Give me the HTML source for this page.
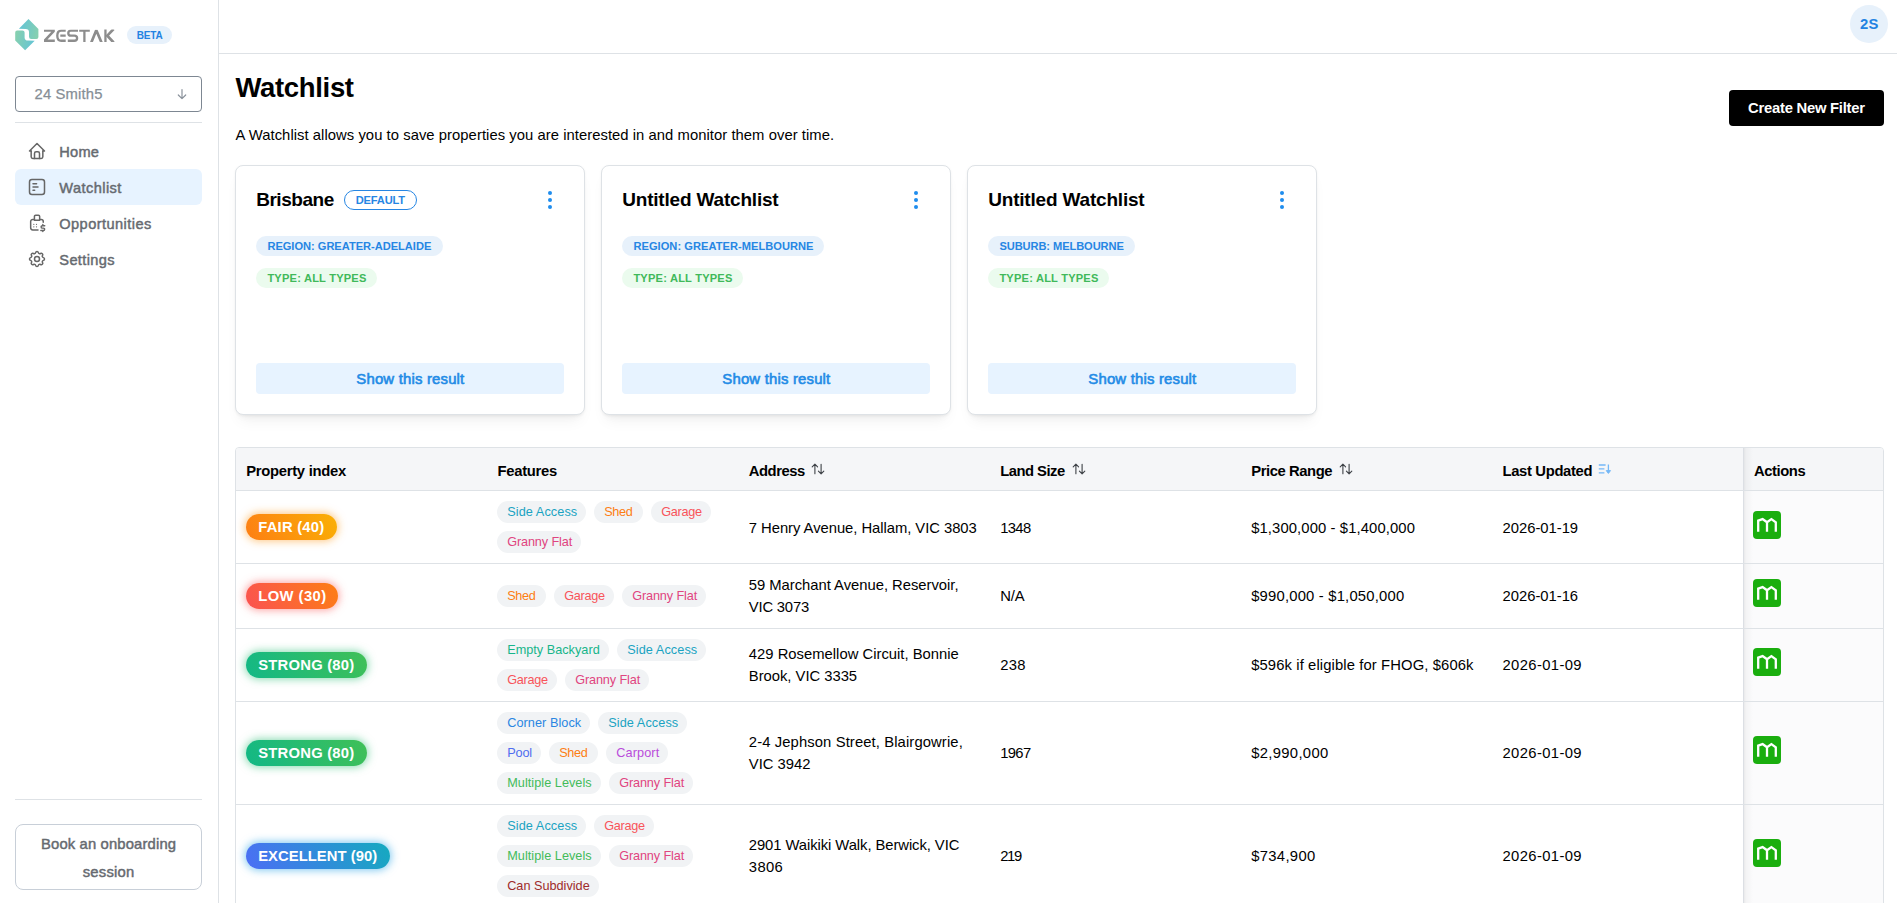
<!DOCTYPE html>
<html>
<head>
<meta charset="utf-8">
<title>Watchlist</title>
<style>
*{box-sizing:border-box;margin:0;padding:0}
html,body{width:1897px;height:903px;overflow:hidden;background:#fff;font-family:"Liberation Sans",sans-serif;color:#000}
div,svg{position:absolute}
.t{white-space:nowrap}
.hr{left:15px;width:187px;height:1px;background:#dee2e6}
.card{top:165px;width:350px;height:250px;border:1px solid #dee2e6;border-radius:8px;background:#fff;box-shadow:0 1px 3px rgba(0,0,0,.05),0 10px 15px -5px rgba(0,0,0,.06),0 7px 7px -5px rgba(0,0,0,.04)}
.dot{width:4px;height:4px;border-radius:2px;background:#1f8dee}
.tagb{height:20px;border-radius:10px;background:#e7f1fb}
.tagg{height:20px;border-radius:10px;background:#ebfbee}
.show{width:308px;height:31px;border-radius:4px;background:#e7f3ff}
.rowline{left:236px;width:1647px;height:1px;background:#dee2e6}
.chip{height:22px;border-radius:11px;background:#f1f3f5}
.pill{height:26px;border-radius:13px}
.m{left:1753px;width:28px;height:28px;border-radius:4px;background:#1aae0e}
</style>
</head>
<body>
<div id="root" style="left:0;top:0;width:1897px;height:903px;overflow:hidden">
<div style="left:218px;top:0;width:1px;height:903px;background:#dee2e6"></div>
<div style="left:219px;top:53px;width:1678px;height:1px;background:#dee2e6"></div>
<svg style="left:10px;top:15px" width="40" height="40" viewBox="0 0 40 40">
<defs>
<linearGradient id="lg1" x1="0" y1="0.35" x2="1" y2="0.65"><stop offset="0" stop-color="#63c4d6"/><stop offset="1" stop-color="#86d0b0"/></linearGradient>
<linearGradient id="lg2" x1="0" y1="0.4" x2="1" y2="1"><stop offset="0" stop-color="#86d0b0"/><stop offset="1" stop-color="#63c4d6"/></linearGradient>
</defs>
<path id="lp" fill="url(#lg1)" d="M18.5 4.1 L28.4 13.9 V22 Q28.4 24 26.4 24 H21.2 Q19 24 19 21.8 V17 Q19 13.9 15.6 13.9 L8.9 13.7 Z"/>
<path fill="url(#lg1)" transform="rotate(180 16.8 19.7)" d="M18.5 4.1 L28.4 13.9 V22 Q28.4 24 26.4 24 H21.2 Q19 24 19 21.8 V17 Q19 13.9 15.6 13.9 L8.9 13.7 Z"/>
</svg>
<svg style="left:40px;top:20px" width="80" height="30" viewBox="0 0 80 30">
<defs><clipPath id="wc"><rect x="0" y="9.5" width="80" height="12.4"/></clipPath></defs>
<g fill="none" stroke="#8d8d8d" stroke-width="2.3" clip-path="url(#wc)">
<path stroke="none" fill="#8d8d8d" d="M4 9.5H14.8V11.8L7.5 19.6H14.8V21.9H4V19.6L11.3 11.8H4Z"/>
<path d="M25.7 10.65 H21.2 Q17.3 10.65 17.3 15.7 Q17.3 20.75 21.2 20.75 H25.7 M20.3 15.7 H25.7"/>
<path d="M38.0 10.65 H31 Q28.3 10.65 28.3 13.2 Q28.3 15.7 31 15.7 H34.3 Q37.1 15.7 37.1 18.2 Q37.1 20.75 34.3 20.75 H27.8"/>
<path d="M39.2 10.65 H49.8 M44.4 10.65 V22"/>
<path d="M51.3 22.5 L56.3 10.2 L61.5 22.5" stroke-width="2.7" stroke-linejoin="bevel"/>
<path d="M65.45 9 V22.5"/>
<path d="M73.6 9 L67.3 15.7 L73.6 22.5" stroke-width="2.7"/>
</g></svg>
<div style="left:127px;top:26px;width:45px;height:18px;border-radius:9px;background:#e7f1fb"></div>
<div class="t" style="left:136.7px;top:25.5px;font-size:10px;line-height:20px;color:#2383e2;font-weight:700;letter-spacing:-0.16px;">BETA</div>
<div style="left:15px;top:76px;width:187px;height:36px;border:1px solid #7d8792;border-radius:4px"></div>
<div class="t" style="left:34.5px;top:84px;font-size:14.8px;line-height:20px;color:#868e96;letter-spacing:0.17px;-webkit-text-stroke:0.25px #868e96;">24 Smith5</div>
<svg style="left:175px;top:87px" width="14" height="14" viewBox="0 0 14 14" fill="none" stroke="#8a929b" stroke-width="1.2" stroke-linecap="round" stroke-linejoin="round"><path d="M7 2.6V11.6M3.3 8 L7 11.7 L10.7 8"/></svg>
<div class="hr" style="top:122px"></div>
<div style="left:15px;top:169px;width:187px;height:36px;border-radius:6px;background:#e7f3ff"></div>
<svg style="left:27px;top:141px" width="20" height="20" viewBox="0 0 24 24" fill="none" stroke="#666" stroke-width="1.8" stroke-linecap="round" stroke-linejoin="round"><path d="M5 12l-2 0l9 -9l9 9l-2 0"/><path d="M5 12v7a2 2 0 0 0 2 2h10a2 2 0 0 0 2 -2v-7"/><path d="M9 21v-6a2 2 0 0 1 2 -2h2a2 2 0 0 1 2 2v6"/></svg>
<svg style="left:27px;top:177px" width="20" height="20" viewBox="0 0 24 24" fill="none" stroke="#666" stroke-width="1.8" stroke-linecap="round" stroke-linejoin="round"><rect x="3" y="3" width="18" height="18" rx="3"/><path d="M7.2 8h4.3M7.2 12h6M7.2 16h2"/></svg>
<svg style="left:27px;top:212.6px" width="20" height="20" viewBox="0 0 24 24" fill="none" stroke="#666" stroke-width="1.8" stroke-linecap="round" stroke-linejoin="round"><path d="M8.9 8.8V4.100a1.500 1.500 0 0 1 1.500 -1.500h3.300a1.500 1.500 0 0 1 1.500 1.500V8.800z"/><path d="M13.200 20.300H6.900a2.500 2.500 0 0 1 -2.500 -2.500V10.200A2.500 2.500 0 0 1 6.900 7.700h2M15.200 7.700h1.800a2.500 2.500 0 0 1 2.500 2.500V11"/><path d="M8.200 13.500h.01M11.400 13.500h.01M8.200 16.600h.01M11.400 16.600h.01" stroke-width="1.500"/><path d="M21.300 15.200h-2.900a1.450 1.450 0 0 0 0 2.900h1.300a1.450 1.450 0 0 1 0 2.900H16.600M19 13.700v1.500M19 21v1.300" stroke-width="1.700"/></svg>
<svg style="left:27px;top:249px" width="20" height="20" viewBox="0 0 24 24" fill="none" stroke="#666" stroke-width="1.8" stroke-linecap="round" stroke-linejoin="round"><path d="M10.325 4.317c.426 -1.756 2.924 -1.756 3.35 0a1.724 1.724 0 0 0 2.573 1.066c1.543 -.94 3.31 .826 2.37 2.37a1.724 1.724 0 0 0 1.065 2.572c1.756 .426 1.756 2.924 0 3.35a1.724 1.724 0 0 0 -1.066 2.573c.94 1.543 -.826 3.31 -2.37 2.37a1.724 1.724 0 0 0 -2.572 1.065c-.426 1.756 -2.924 1.756 -3.35 0a1.724 1.724 0 0 0 -2.573 -1.066c-1.543 .94 -3.31 -.826 -2.37 -2.37a1.724 1.724 0 0 0 -1.065 -2.572c-1.756 -.426 -1.756 -2.924 0 -3.35a1.724 1.724 0 0 0 1.066 -2.573c-.94 -1.543 .826 -3.31 2.37 -2.37c1 .608 2.296 .07 2.572 -1.065z"/><path d="M9 12a3 3 0 1 0 6 0a3 3 0 0 0 -6 0"/></svg>
<div class="t" style="left:59.3px;top:142px;font-size:14.6px;line-height:20px;color:#666a70;letter-spacing:0.22px;-webkit-text-stroke:0.45px #666a70;">Home</div>
<div class="t" style="left:59.3px;top:178px;font-size:14.6px;line-height:20px;color:#666a70;letter-spacing:0.42px;-webkit-text-stroke:0.45px #666a70;">Watchlist</div>
<div class="t" style="left:59.3px;top:214px;font-size:14.6px;line-height:20px;color:#666a70;letter-spacing:0.43px;-webkit-text-stroke:0.45px #666a70;">Opportunities</div>
<div class="t" style="left:59.3px;top:250px;font-size:14.6px;line-height:20px;color:#666a70;letter-spacing:0.35px;-webkit-text-stroke:0.45px #666a70;">Settings</div>
<div class="hr" style="top:799px"></div>
<div style="left:15px;top:824px;width:187px;height:66px;border:1px solid #c8cfd8;border-radius:8px"></div>
<div class="t" style="left:41px;top:833.9px;font-size:14.8px;line-height:20px;color:#666a70;letter-spacing:0.15px;-webkit-text-stroke:0.45px #666a70;">Book an onboarding</div>
<div class="t" style="left:82.75px;top:861.9px;font-size:14.8px;line-height:20px;color:#666a70;letter-spacing:0.22px;-webkit-text-stroke:0.45px #666a70;">session</div>
<div style="left:1850px;top:5px;width:38px;height:38px;border-radius:19px;background:#e7f1fb"></div>
<div class="t" style="left:1859.95px;top:14px;font-size:14.8px;line-height:20px;color:#2383e2;font-weight:700;letter-spacing:0.39px;">2S</div>
<div style="left:1729px;top:90px;width:155px;height:36px;border-radius:4px;background:#000"></div>
<div class="t" style="left:1748px;top:98px;font-size:14.8px;line-height:20px;color:#fff;font-weight:700;letter-spacing:-0.24px;">Create New Filter</div>
<div class="t" style="left:235.5px;top:69.5px;font-size:27.5px;line-height:36px;color:#000;font-weight:700;letter-spacing:-0.34px;">Watchlist</div>
<div class="t" style="left:235.5px;top:125.3px;font-size:14.8px;line-height:20px;color:#000;letter-spacing:0.05px;">A Watchlist allows you to save properties you are interested in and monitor them over time.</div>
<div class="card" style="left:235px"></div>
<div class="t" style="left:256.2px;top:185.5px;font-size:19px;line-height:28px;color:#000;font-weight:700;letter-spacing:-0.47px;">Brisbane</div>
<div style="left:344px;top:190px;width:73px;height:20px;border:1px solid #2686e3;border-radius:10px"></div>
<div class="t" style="left:355.65px;top:190.2px;font-size:11.1px;line-height:20px;color:#2686e3;font-weight:700;letter-spacing:-0.14px;">DEFAULT</div>
<div class="dot" style="left:548px;top:191px"></div>
<div class="dot" style="left:548px;top:198px"></div>
<div class="dot" style="left:548px;top:205px"></div>
<div class="tagb" style="left:256px;top:236px;width:187px"></div>
<div class="t" style="left:267.4px;top:236.2px;font-size:11.1px;line-height:20px;color:#2686e3;font-weight:700;letter-spacing:-0.02px;">REGION: GREATER-ADELAIDE</div>
<div class="tagg" style="left:256px;top:268px;width:121px"></div>
<div class="t" style="left:267.4px;top:268.2px;font-size:11.1px;line-height:20px;color:#40b95a;font-weight:700;letter-spacing:0.2px;">TYPE: ALL TYPES</div>
<div class="show" style="left:256px;top:363px"></div>
<div class="t" style="left:356.3px;top:368.8px;font-size:14.9px;line-height:20px;color:#228be6;letter-spacing:0.19px;-webkit-text-stroke:0.6px #228be6;">Show this result</div>
<div class="card" style="left:601px"></div>
<div class="t" style="left:622.2px;top:185.5px;font-size:19px;line-height:28px;color:#000;font-weight:700;letter-spacing:-0.19px;">Untitled Watchlist</div>
<div class="dot" style="left:914px;top:191px"></div>
<div class="dot" style="left:914px;top:198px"></div>
<div class="dot" style="left:914px;top:205px"></div>
<div class="tagb" style="left:622px;top:236px;width:202px"></div>
<div class="t" style="left:633.4px;top:236.2px;font-size:11.1px;line-height:20px;color:#2686e3;font-weight:700;letter-spacing:0.04px;">REGION: GREATER-MELBOURNE</div>
<div class="tagg" style="left:622px;top:268px;width:121px"></div>
<div class="t" style="left:633.4px;top:268.2px;font-size:11.1px;line-height:20px;color:#40b95a;font-weight:700;letter-spacing:0.2px;">TYPE: ALL TYPES</div>
<div class="show" style="left:622px;top:363px"></div>
<div class="t" style="left:722.3px;top:368.8px;font-size:14.9px;line-height:20px;color:#228be6;letter-spacing:0.19px;-webkit-text-stroke:0.6px #228be6;">Show this result</div>
<div class="card" style="left:967px"></div>
<div class="t" style="left:988.2px;top:185.5px;font-size:19px;line-height:28px;color:#000;font-weight:700;letter-spacing:-0.19px;">Untitled Watchlist</div>
<div class="dot" style="left:1280px;top:191px"></div>
<div class="dot" style="left:1280px;top:198px"></div>
<div class="dot" style="left:1280px;top:205px"></div>
<div class="tagb" style="left:988px;top:236px;width:147px"></div>
<div class="t" style="left:999.4px;top:236.2px;font-size:11.1px;line-height:20px;color:#2686e3;font-weight:700;letter-spacing:-0.08px;">SUBURB: MELBOURNE</div>
<div class="tagg" style="left:988px;top:268px;width:121px"></div>
<div class="t" style="left:999.4px;top:268.2px;font-size:11.1px;line-height:20px;color:#40b95a;font-weight:700;letter-spacing:0.2px;">TYPE: ALL TYPES</div>
<div class="show" style="left:988px;top:363px"></div>
<div class="t" style="left:1088.3px;top:368.8px;font-size:14.9px;line-height:20px;color:#228be6;letter-spacing:0.19px;-webkit-text-stroke:0.6px #228be6;">Show this result</div>
<div style="left:235px;top:447px;width:1649px;height:470px;border:1px solid #dee2e6;border-radius:4px 4px 0 0;background:#fff"></div>
<div style="left:236px;top:448px;width:1647px;height:42px;background:#f5f6f8;border-radius:3px 3px 0 0"></div>
<div style="left:1744px;top:491px;width:139px;height:420px;background:#fbfbfc"></div>
<div style="left:1743px;top:448px;width:10px;height:460px;background:linear-gradient(90deg,rgba(0,0,0,.09),rgba(0,0,0,.03) 30%,rgba(0,0,0,0))"></div>
<div style="left:1743px;top:448px;width:1px;height:460px;background:#dcdfe4"></div>
<div class="rowline" style="top:490px"></div>
<div class="rowline" style="top:563px"></div>
<div class="rowline" style="top:628px"></div>
<div class="rowline" style="top:701px"></div>
<div class="rowline" style="top:804px"></div>
<div class="t" style="left:246.2px;top:460.6px;font-size:14.8px;line-height:20px;color:#000;font-weight:700;letter-spacing:-0.28px;">Property index</div>
<div class="t" style="left:497.5px;top:460.6px;font-size:14.8px;line-height:20px;color:#000;font-weight:700;letter-spacing:-0.28px;">Features</div>
<div class="t" style="left:748.8px;top:460.6px;font-size:14.8px;line-height:20px;color:#000;font-weight:700;letter-spacing:-0.47px;">Address</div>
<div class="t" style="left:1000.2px;top:460.6px;font-size:14.8px;line-height:20px;color:#000;font-weight:700;letter-spacing:-0.51px;">Land Size</div>
<div class="t" style="left:1251.2px;top:460.6px;font-size:14.8px;line-height:20px;color:#000;font-weight:700;letter-spacing:-0.42px;">Price Range</div>
<div class="t" style="left:1502.5px;top:460.6px;font-size:14.8px;line-height:20px;color:#000;font-weight:700;letter-spacing:-0.34px;">Last Updated</div>
<div class="t" style="left:1754px;top:460.6px;font-size:14.8px;line-height:20px;color:#000;font-weight:700;letter-spacing:-0.43px;">Actions</div>
<svg style="left:811.3px;top:462px" width="14" height="14" viewBox="0 0 14 14" fill="none" stroke="#3d4146" stroke-width="1.1" stroke-linecap="round" stroke-linejoin="round"><path d="M3.9 11.8V2.2M1.2 4.9L3.9 2.2L6.6 4.9M10.1 2.2V11.8M7.4 9.1L10.1 11.8L12.8 9.1"/></svg>
<svg style="left:1071.5px;top:462px" width="14" height="14" viewBox="0 0 14 14" fill="none" stroke="#3d4146" stroke-width="1.1" stroke-linecap="round" stroke-linejoin="round"><path d="M3.9 11.8V2.2M1.2 4.9L3.9 2.2L6.6 4.9M10.1 2.2V11.8M7.4 9.1L10.1 11.8L12.8 9.1"/></svg>
<svg style="left:1338.5px;top:462px" width="14" height="14" viewBox="0 0 14 14" fill="none" stroke="#3d4146" stroke-width="1.1" stroke-linecap="round" stroke-linejoin="round"><path d="M3.9 11.8V2.2M1.2 4.9L3.9 2.2L6.6 4.9M10.1 2.2V11.8M7.4 9.1L10.1 11.8L12.8 9.1"/></svg>
<svg style="left:1597.7px;top:462px" width="14" height="14" viewBox="0 0 14 14" fill="none" stroke="#74b8f7" stroke-width="1.3" stroke-linecap="butt" stroke-linejoin="round"><path d="M0.8 3H7.6M0.8 6.9H6.4M0.8 10.8H6.4M10.4 2.6V11"/><path d="M8.3 8.6L10.4 11.4L12.5 8.6Z" fill="#74b8f7" stroke-width="1"/></svg>
<div class="pill" style="left:246px;top:514px;width:91px;background:linear-gradient(60deg,#fd7e14,#fab005);box-shadow:0 0 9px 1px rgba(253,150,20,.55)"></div>
<div class="t" style="left:258.2px;top:517.2px;font-size:14.8px;line-height:20px;color:#fff;font-weight:700;letter-spacing:0.23px;">FAIR (40)</div>
<div class="t" style="left:748.8px;top:518px;font-size:14.8px;line-height:20px;color:#000;letter-spacing:-0.04px;">7 Henry Avenue, Hallam, VIC 3803</div>
<div class="t" style="left:1000.2px;top:518px;font-size:14.8px;line-height:20px;color:#000;letter-spacing:-0.64px;">1348</div>
<div class="t" style="left:1251.2px;top:518px;font-size:14.8px;line-height:20px;color:#000;letter-spacing:0.11px;">$1,300,000 - $1,400,000</div>
<div class="t" style="left:1502.5px;top:518px;font-size:14.8px;line-height:20px;color:#000;letter-spacing:-0.01px;">2026-01-19</div>
<div class="m" style="top:511px"><svg style="left:0;top:0" width="28" height="28" viewBox="0 0 28 28" fill="none" stroke="#fff" stroke-width="2.3" stroke-linejoin="miter"><path d="M5.2 20.7V9.6L9.6 8.1L14 11.2V20.7M14 11.2L18.4 8.1L22.8 11.3V20.7"/></svg></div>
<div class="chip" style="left:497px;top:501px;width:89px"></div>
<div class="t" style="left:507.2px;top:502.1px;font-size:12.7px;line-height:20px;color:#1aa3c2;letter-spacing:0.09px;">Side Access</div>
<div class="chip" style="left:594px;top:501px;width:49px"></div>
<div class="t" style="left:604.2px;top:502.1px;font-size:12.7px;line-height:20px;color:#fd7e14;letter-spacing:-0.31px;">Shed</div>
<div class="chip" style="left:651px;top:501px;width:60px"></div>
<div class="t" style="left:661.2px;top:502.1px;font-size:12.7px;line-height:20px;color:#f8545a;letter-spacing:-0.27px;">Garage</div>
<div class="chip" style="left:497px;top:531px;width:84px"></div>
<div class="t" style="left:507.2px;top:532.1px;font-size:12.7px;line-height:20px;color:#e0457f;letter-spacing:-0.13px;">Granny Flat</div>
<div class="pill" style="left:246px;top:583px;width:92px;background:linear-gradient(60deg,#fa5252,#fd7e14);box-shadow:0 0 9px 1px rgba(250,82,82,.55)"></div>
<div class="t" style="left:258.2px;top:586.2px;font-size:14.8px;line-height:20px;color:#fff;font-weight:700;letter-spacing:0.44px;">LOW (30)</div>
<div class="t" style="left:748.8px;top:575px;font-size:14.8px;line-height:20px;color:#000;letter-spacing:-0.02px;">59 Marchant Avenue, Reservoir,</div>
<div class="t" style="left:748.8px;top:597px;font-size:14.8px;line-height:20px;color:#000;letter-spacing:-0.19px;">VIC 3073</div>
<div class="t" style="left:1000.2px;top:586px;font-size:14.8px;line-height:20px;color:#000;letter-spacing:-0.14px;">N/A</div>
<div class="t" style="left:1251.2px;top:586px;font-size:14.8px;line-height:20px;color:#000;letter-spacing:0.2px;">$990,000 - $1,050,000</div>
<div class="t" style="left:1502.5px;top:586px;font-size:14.8px;line-height:20px;color:#000;letter-spacing:-0.01px;">2026-01-16</div>
<div class="m" style="top:579px"><svg style="left:0;top:0" width="28" height="28" viewBox="0 0 28 28" fill="none" stroke="#fff" stroke-width="2.3" stroke-linejoin="miter"><path d="M5.2 20.7V9.6L9.6 8.1L14 11.2V20.7M14 11.2L18.4 8.1L22.8 11.3V20.7"/></svg></div>
<div class="chip" style="left:497px;top:585px;width:49px"></div>
<div class="t" style="left:507.2px;top:586.1px;font-size:12.7px;line-height:20px;color:#fd7e14;letter-spacing:-0.31px;">Shed</div>
<div class="chip" style="left:554px;top:585px;width:60px"></div>
<div class="t" style="left:564.2px;top:586.1px;font-size:12.7px;line-height:20px;color:#f8545a;letter-spacing:-0.27px;">Garage</div>
<div class="chip" style="left:622px;top:585px;width:84px"></div>
<div class="t" style="left:632.2px;top:586.1px;font-size:12.7px;line-height:20px;color:#e0457f;letter-spacing:-0.13px;">Granny Flat</div>
<div class="pill" style="left:246px;top:652px;width:121px;background:linear-gradient(60deg,#12b886,#40c057);box-shadow:0 0 9px 1px rgba(32,186,110,.55)"></div>
<div class="t" style="left:258.2px;top:655.2px;font-size:14.8px;line-height:20px;color:#fff;font-weight:700;letter-spacing:0.23px;">STRONG (80)</div>
<div class="t" style="left:748.8px;top:644px;font-size:14.8px;line-height:20px;color:#000;letter-spacing:0.01px;">429 Rosemellow Circuit, Bonnie</div>
<div class="t" style="left:748.8px;top:666px;font-size:14.8px;line-height:20px;color:#000;letter-spacing:-0.02px;">Brook, VIC 3335</div>
<div class="t" style="left:1000.2px;top:655px;font-size:14.8px;line-height:20px;color:#000;letter-spacing:0.35px;">238</div>
<div class="t" style="left:1251.2px;top:655px;font-size:14.8px;line-height:20px;color:#000;letter-spacing:0.11px;">$596k if eligible for FHOG, $606k</div>
<div class="t" style="left:1502.5px;top:655px;font-size:14.8px;line-height:20px;color:#000;letter-spacing:0.37px;">2026-01-09</div>
<div class="m" style="top:648px"><svg style="left:0;top:0" width="28" height="28" viewBox="0 0 28 28" fill="none" stroke="#fff" stroke-width="2.3" stroke-linejoin="miter"><path d="M5.2 20.7V9.6L9.6 8.1L14 11.2V20.7M14 11.2L18.4 8.1L22.8 11.3V20.7"/></svg></div>
<div class="chip" style="left:497px;top:639px;width:112px"></div>
<div class="t" style="left:507.2px;top:640.1px;font-size:12.7px;line-height:20px;color:#16b58a;letter-spacing:0.01px;">Empty Backyard</div>
<div class="chip" style="left:617px;top:639px;width:89px"></div>
<div class="t" style="left:627.2px;top:640.1px;font-size:12.7px;line-height:20px;color:#1aa3c2;letter-spacing:0.09px;">Side Access</div>
<div class="chip" style="left:497px;top:669px;width:60px"></div>
<div class="t" style="left:507.2px;top:670.1px;font-size:12.7px;line-height:20px;color:#f8545a;letter-spacing:-0.27px;">Garage</div>
<div class="chip" style="left:565px;top:669px;width:84px"></div>
<div class="t" style="left:575.2px;top:670.1px;font-size:12.7px;line-height:20px;color:#e0457f;letter-spacing:-0.13px;">Granny Flat</div>
<div class="pill" style="left:246px;top:740px;width:121px;background:linear-gradient(60deg,#12b886,#40c057);box-shadow:0 0 9px 1px rgba(32,186,110,.55)"></div>
<div class="t" style="left:258.2px;top:743.2px;font-size:14.8px;line-height:20px;color:#fff;font-weight:700;letter-spacing:0.23px;">STRONG (80)</div>
<div class="t" style="left:748.8px;top:732px;font-size:14.8px;line-height:20px;color:#000;letter-spacing:0.11px;">2-4 Jephson Street, Blairgowrie,</div>
<div class="t" style="left:748.8px;top:754px;font-size:14.8px;line-height:20px;color:#000;letter-spacing:-0.01px;">VIC 3942</div>
<div class="t" style="left:1000.2px;top:743px;font-size:14.8px;line-height:20px;color:#000;letter-spacing:-0.64px;">1967</div>
<div class="t" style="left:1251.2px;top:743px;font-size:14.8px;line-height:20px;color:#000;letter-spacing:0.33px;">$2,990,000</div>
<div class="t" style="left:1502.5px;top:743px;font-size:14.8px;line-height:20px;color:#000;letter-spacing:0.37px;">2026-01-09</div>
<div class="m" style="top:736px"><svg style="left:0;top:0" width="28" height="28" viewBox="0 0 28 28" fill="none" stroke="#fff" stroke-width="2.3" stroke-linejoin="miter"><path d="M5.2 20.7V9.6L9.6 8.1L14 11.2V20.7M14 11.2L18.4 8.1L22.8 11.3V20.7"/></svg></div>
<div class="chip" style="left:497px;top:712px;width:93px"></div>
<div class="t" style="left:507.2px;top:713.1px;font-size:12.7px;line-height:20px;color:#2a86e2;letter-spacing:0.06px;">Corner Block</div>
<div class="chip" style="left:598px;top:712px;width:89px"></div>
<div class="t" style="left:608.2px;top:713.1px;font-size:12.7px;line-height:20px;color:#1aa3c2;letter-spacing:0.09px;">Side Access</div>
<div class="chip" style="left:497px;top:742px;width:44px"></div>
<div class="t" style="left:507.2px;top:743.1px;font-size:12.7px;line-height:20px;color:#4f6df0;letter-spacing:-0.14px;">Pool</div>
<div class="chip" style="left:549px;top:742px;width:49px"></div>
<div class="t" style="left:559.2px;top:743.1px;font-size:12.7px;line-height:20px;color:#fd7e14;letter-spacing:-0.31px;">Shed</div>
<div class="chip" style="left:606px;top:742px;width:62px"></div>
<div class="t" style="left:616.2px;top:743.1px;font-size:12.7px;line-height:20px;color:#b94cdb;letter-spacing:0.11px;">Carport</div>
<div class="chip" style="left:497px;top:772px;width:104px"></div>
<div class="t" style="left:507.2px;top:773.1px;font-size:12.7px;line-height:20px;color:#43bb5a;letter-spacing:0.04px;">Multiple Levels</div>
<div class="chip" style="left:609px;top:772px;width:84px"></div>
<div class="t" style="left:619.2px;top:773.1px;font-size:12.7px;line-height:20px;color:#e0457f;letter-spacing:-0.13px;">Granny Flat</div>
<div class="pill" style="left:246px;top:843px;width:144px;background:linear-gradient(60deg,#4c6ef5,#15aabf);box-shadow:0 0 9px 1px rgba(34,160,230,.6)"></div>
<div class="t" style="left:258.2px;top:846.2px;font-size:14.8px;line-height:20px;color:#fff;font-weight:700;letter-spacing:0.05px;">EXCELLENT (90)</div>
<div class="t" style="left:748.8px;top:835px;font-size:14.8px;line-height:20px;color:#000;letter-spacing:-0.07px;">2901 Waikiki Walk, Berwick, VIC</div>
<div class="t" style="left:748.8px;top:857px;font-size:14.8px;line-height:20px;color:#000;letter-spacing:0.36px;">3806</div>
<div class="t" style="left:1000.2px;top:846px;font-size:14.8px;line-height:20px;color:#000;letter-spacing:-1.35px;">219</div>
<div class="t" style="left:1251.2px;top:846px;font-size:14.8px;line-height:20px;color:#000;letter-spacing:0.33px;">$734,900</div>
<div class="t" style="left:1502.5px;top:846px;font-size:14.8px;line-height:20px;color:#000;letter-spacing:0.37px;">2026-01-09</div>
<div class="m" style="top:839px"><svg style="left:0;top:0" width="28" height="28" viewBox="0 0 28 28" fill="none" stroke="#fff" stroke-width="2.3" stroke-linejoin="miter"><path d="M5.2 20.7V9.6L9.6 8.1L14 11.2V20.7M14 11.2L18.4 8.1L22.8 11.3V20.7"/></svg></div>
<div class="chip" style="left:497px;top:815px;width:89px"></div>
<div class="t" style="left:507.2px;top:816.1px;font-size:12.7px;line-height:20px;color:#1aa3c2;letter-spacing:0.09px;">Side Access</div>
<div class="chip" style="left:594px;top:815px;width:60px"></div>
<div class="t" style="left:604.2px;top:816.1px;font-size:12.7px;line-height:20px;color:#f8545a;letter-spacing:-0.27px;">Garage</div>
<div class="chip" style="left:497px;top:845px;width:104px"></div>
<div class="t" style="left:507.2px;top:846.1px;font-size:12.7px;line-height:20px;color:#43bb5a;letter-spacing:0.04px;">Multiple Levels</div>
<div class="chip" style="left:609px;top:845px;width:84px"></div>
<div class="t" style="left:619.2px;top:846.1px;font-size:12.7px;line-height:20px;color:#e0457f;letter-spacing:-0.13px;">Granny Flat</div>
<div class="chip" style="left:497px;top:875px;width:102px"></div>
<div class="t" style="left:507.2px;top:876.1px;font-size:12.7px;line-height:20px;color:#9e2b2b;">Can Subdivide</div>
</div>
</body>
</html>
